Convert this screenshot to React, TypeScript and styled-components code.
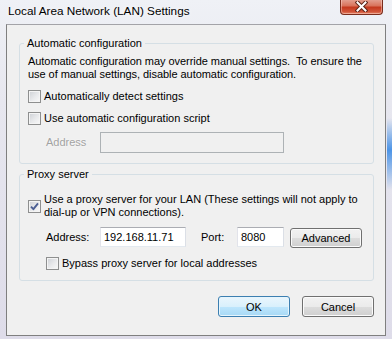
import React from 'react'
import styled, { createGlobalStyle } from 'styled-components'

const GlobalStyle = createGlobalStyle`
  html, body {
    margin: 0;
    padding: 0;
  }
  body {
    font-family: "Liberation Sans", Arial, sans-serif;
    font-size: 11px;
    color: #000;
  }
`

const Window = styled.div`
  width: 392px;
  height: 339px;
  display: flex;
  flex-direction: column;
  box-sizing: border-box;
  background:
    linear-gradient(to bottom, rgba(80, 150, 230, 0) 118px, rgba(60, 140, 230, 0.9) 150px, rgba(80, 150, 230, 0) 190px) right top / 5px 100% no-repeat,
    linear-gradient(to bottom, #eff1f6 0%, #e7e7ef 30%, #dedce9 100%);
`

const TitleBar = styled.div`
  height: 24px;
  flex: none;
  display: flex;
  align-items: flex-start;
  padding: 0 9px 0 8px;
  box-sizing: border-box;
`

const Title = styled.span`
  font-size: 11.75px;
  line-height: 15px;
  margin-top: 3px;
  text-shadow: 0 0 5px #fff;
`

const CloseButton = styled.div`
  margin-left: auto;
  margin-top: -1px;
  width: 43px;
  height: 16px;
  box-sizing: border-box;
  border: 1px solid #7a2c1c;
  border-top: none;
  border-radius: 0 0 4px 4px;
  background: linear-gradient(to bottom, #e4a596 0%, #d9735c 45%, #c4391e 55%, #d2553a 85%, #e58a6d 100%);
  box-shadow: inset 0 0 0 1px rgba(255, 220, 210, 0.45);
  display: flex;
  align-items: center;
  justify-content: center;
`

const Client = styled.div`
  flex: 1;
  margin: 0 6px 3px 6px;
  border: 1px solid #7f7f7f;
  border-top-color: #a3a3a8;
  background: #f0f0f0;
  padding: 0 11px 0 12px;
  display: flex;
  flex-direction: column;
`

const GroupBox = styled.fieldset<{ $top: number }>`
  margin: ${(p) => p.$top}px 0 0 0;
  padding: 5px 8px 10px 8px;
  border: 1px solid #d5dfe5;
  border-radius: 3px;
  min-inline-size: 0;
`

const Legend = styled.legend`
  margin-left: -4px;
  padding: 0 3px;
  line-height: 13px;
`

const Description = styled.p`
  margin: 0;
  line-height: 13px;
  white-space: nowrap;
  letter-spacing: -0.05px;
`

const CheckRow = styled.label<{ $top: number; $indent?: number }>`
  display: flex;
  align-items: center;
  gap: 3px;
  margin-top: ${(p) => p.$top}px;
  margin-left: ${(p) => p.$indent ?? 0}px;
  line-height: 13px;
  white-space: nowrap;
`

const Box = styled.span`
  width: 13px;
  height: 13px;
  flex: none;
  box-sizing: border-box;
  border: 1px solid #8e8f8f;
  background: linear-gradient(135deg, #cdd0d5 0%, #e9eaec 55%, #f9f9f9 100%);
  box-shadow: inset 0 0 0 1px #f4f4f4;
  display: flex;
  align-items: center;
  justify-content: center;
`

const FieldRow = styled.div<{ $top: number }>`
  display: flex;
  align-items: flex-start;
  margin-top: ${(p) => p.$top}px;
  padding-left: 18px;
`

const FieldLabel = styled.span<{ $w: number; $gap?: number; $disabled?: boolean; $h: number }>`
  width: ${(p) => p.$w}px;
  margin-left: ${(p) => p.$gap ?? 0}px;
  line-height: ${(p) => p.$h}px;
  color: ${(p) => (p.$disabled ? '#a2a2a2' : '#000')};
  text-shadow: ${(p) => (p.$disabled ? '0 0 2px #fff' : 'none')};
`

const TextBox = styled.input<{ $w: number; $h: number }>`
  width: ${(p) => p.$w}px;
  height: ${(p) => p.$h}px;
  box-sizing: border-box;
  margin: 0;
  padding: 0 3px;
  border: 1px solid;
  border-color: #abadb3 #dbdfe6 #e3e9ef #e2e3ea;
  background: #fff;
  font: inherit;
  color: #000;
  outline: none;

  &:disabled {
    background: #f0f0f0;
    border-color: #adb2b5;
  }
`

const Button = styled.button<{ $default?: boolean; $top?: number; $gap?: number; $h?: number }>`
  width: 72px;
  height: ${(p) => p.$h ?? 21}px;
  box-sizing: border-box;
  margin: ${(p) => p.$top ?? 0}px 0 0 ${(p) => p.$gap ?? 0}px;
  padding: 0;
  font: inherit;
  color: #000;
  border: 1px solid ${(p) => (p.$default ? '#3c7fb1' : '#707070')};
  border-radius: 3px;
  background: ${(p) =>
    p.$default
      ? 'linear-gradient(#eaf6fd 0%, #d9f0fc 50%, #bee6fd 50%, #a7d9f5 100%)'
      : 'linear-gradient(#f2f2f2 0%, #ebebeb 50%, #dddddd 50%, #cfcfcf 100%)'};
  box-shadow: inset 0 0 0 1px ${(p) => (p.$default ? '#e6f5fd' : '#fbfbfb')};
`

const ButtonBar = styled.div`
  display: flex;
  justify-content: flex-end;
  gap: 12px;
  margin-top: 15px;
`

const CheckBox = ({ checked }: { checked?: boolean }) => (
  <Box>
    {checked && (
      <svg width="9" height="9" viewBox="0 0 9 9">
        <path d="M1 4.6 L3.4 7.2 L8 1.4" fill="none" stroke="#4b5e93" strokeWidth="1.9" strokeLinejoin="round" />
      </svg>
    )}
  </Box>
)

export default function App() {
  return (
    <Window>
      <GlobalStyle />
      <TitleBar>
        <Title>Local Area Network (LAN) Settings</Title>
        <CloseButton>
          <svg width="13" height="11" viewBox="0 0 13 11">
            <path d="M2.5 1.5 L10.5 9.5 M10.5 1.5 L2.5 9.5" stroke="#5b2418" strokeWidth="4" strokeLinecap="square" />
            <path d="M2.5 1.5 L10.5 9.5 M10.5 1.5 L2.5 9.5" stroke="#ffffff" strokeWidth="2" strokeLinecap="square" />
          </svg>
        </CloseButton>
      </TitleBar>
      <Client>
        <GroupBox $top={12}>
          <Legend>Automatic configuration</Legend>
          <Description>
            Automatic configuration may override manual settings.&nbsp; To ensure the
            <br />
            use of manual settings, disable automatic configuration.
          </Description>
          <CheckRow $top={9}>
            <CheckBox />
            Automatically detect settings
          </CheckRow>
          <CheckRow $top={9}>
            <CheckBox />
            Use automatic configuration script
          </CheckRow>
          <FieldRow $top={7}>
            <FieldLabel $w={54} $h={21} $disabled>
              Address
            </FieldLabel>
            <TextBox $w={184} $h={21} disabled />
          </FieldRow>
        </GroupBox>

        <GroupBox $top={4}>
          <Legend>Proxy server</Legend>
          <CheckRow $top={7}>
            <CheckBox checked />
            <span>
              Use a proxy server for your LAN (These settings will not apply to
              <br />
              dial-up or VPN connections).
            </span>
          </CheckRow>
          <FieldRow $top={8}>
            <FieldLabel $w={54} $h={20}>
              Address:
            </FieldLabel>
            <TextBox $w={86} $h={20} defaultValue="192.168.11.71" />
            <FieldLabel $w={36} $gap={15} $h={20}>
              Port:
            </FieldLabel>
            <TextBox $w={47} $h={20} defaultValue="8080" />
            <Button $top={1} $gap={6} $h={20}>
              Advanced
            </Button>
          </FieldRow>
          <CheckRow $top={9} $indent={18}>
            <CheckBox />
            Bypass proxy server for local addresses
          </CheckRow>
        </GroupBox>

        <ButtonBar>
          <Button $default>OK</Button>
          <Button>Cancel</Button>
        </ButtonBar>
      </Client>
    </Window>
  )
}
